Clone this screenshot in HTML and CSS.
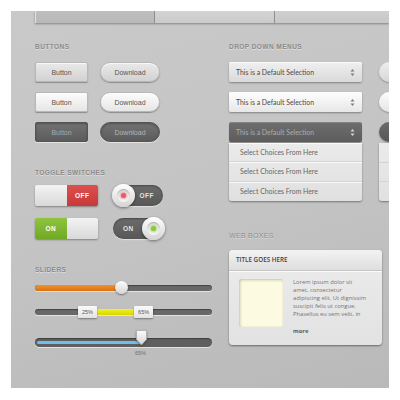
FILE: index.html
```html
<!DOCTYPE html>
<html>
<head>
<meta charset="utf-8">
<link rel="stylesheet" href="styles.css">
</head>
<body>
<div class="panel">
  <div class="tabs">
    <div class="tab t1"></div>
    <div class="tab t2"></div>
    <div class="tab t3"></div>
  </div>

  <div class="cols">
    <div class="col">
      <h2 class="heading">Buttons</h2>
      <div class="btn-grid">
        <button class="btn rect light">Button</button>
        <button class="btn pill light">Download</button>
        <button class="btn rect white">Button</button>
        <button class="btn pill white">Download</button>
        <button class="btn rect dark">Button</button>
        <button class="btn pill dark">Download</button>
      </div>

      <h2 class="heading gap-lg">Toggle Switches</h2>
      <div class="toggle-grid">
        <div class="switch">
          <span class="half blank"></span>
          <span class="half off">OFF</span>
        </div>
        <div class="round-switch">
          <span class="knob left"><span class="dot red"></span></span>
          <span class="round-label right">OFF</span>
        </div>
        <div class="switch">
          <span class="half on">ON</span>
          <span class="half blank"></span>
        </div>
        <div class="round-switch">
          <span class="round-label left">ON</span>
          <span class="knob right"><span class="dot green"></span></span>
        </div>
      </div>

      <h2 class="heading gap-lg">Sliders</h2>
      <div class="slider s1">
        <div class="track">
          <div class="fill orange" style="width:48%"></div>
          <span class="handle-round" style="left:48.5%"></span>
        </div>
      </div>
      <div class="slider s2">
        <div class="track">
          <div class="fill yellow" style="left:30%;width:52px"></div>
          <span class="tag" style="left:24.3%">25%</span>
          <span class="tag" style="left:56%">65%</span>
        </div>
      </div>
      <div class="slider s3">
        <div class="track thick">
          <div class="fill blue" style="width:104px"></div>
          <span class="handle-drop" style="left:100px">
            <svg width="13" height="17" viewBox="0 0 13 17"><defs><linearGradient id="dg" x1="0" y1="0" x2="0" y2="1"><stop offset="0" stop-color="#fbfbfb"/><stop offset="1" stop-color="#d6d6d6"/></linearGradient></defs><path d="M1.5 1.5h10v9l-5 5.5l-5-5.5z" fill="url(#dg)" stroke="#a9a9a9" stroke-width=".8" stroke-linejoin="round"/></svg>
          </span>
        </div>
        <div class="value" style="padding-left:100px">65%</div>
      </div>
    </div>

    <div class="col">
      <h2 class="heading">Drop Down Menus</h2>
      <div class="dd-row">
        <div class="dd-main">
          <div class="select light">This is a Default Selection<svg class="arrows" width="5" height="9" viewBox="0 0 5 9"><path d="M2.5 1L4.5 3.5H.5zM2.5 8L.5 5.5h4z" fill="#7c7c7c"/></svg></div>
          <div class="select white">This is a Default Selection<svg class="arrows" width="5" height="9" viewBox="0 0 5 9"><path d="M2.5 1L4.5 3.5H.5zM2.5 8L.5 5.5h4z" fill="#7c7c7c"/></svg></div>
          <div class="select dark">This is a Default Selection<svg class="arrows" width="5" height="9" viewBox="0 0 5 9"><path d="M2.5 1L4.5 3.5H.5zM2.5 8L.5 5.5h4z" fill="#d6d6d6"/></svg></div>
          <ul class="options">
            <li>Select Choices From Here</li>
            <li>Select Choices From Here</li>
            <li>Select Choices From Here</li>
          </ul>
        </div>
        <div class="dd-alt">
          <span class="circle light"></span>
          <span class="circle white"></span>
          <span class="circle dark"></span>
          <span class="alt-list"></span>
        </div>
      </div>

      <h2 class="heading light-heading">Web Boxes</h2>
      <div class="webbox">
        <div class="webbox-title">TITLE GOES HERE</div>
        <div class="webbox-body">
          <div class="thumb"></div>
          <div class="copy">
            <p>Lorem ipsum dolor sit<br>amet, consectetur<br>adipiscing elit. Ut dignissim<br>suscipit felis ut congue.<br>Phasellus eu sem velit, in</p>
            <a class="more">more</a>
          </div>
        </div>
      </div>
    </div>
  </div>
</div>
</body>
</html>
```

FILE: styles.css
```css
* { box-sizing: border-box; }

body {
  margin: 0;
  background: #fff;
}

.panel {
  width: 378px;
  height: 377px;
  margin: 11px;
  overflow: hidden;
  background: linear-gradient(165deg, #c9c9c9 0%, #c4c4c4 50%, #b9b9b9 100%);
}

/* top tab strip */
.tabs {
  display: flex;
  height: 12px;
  margin-left: 24px;
  box-shadow: 0 1px 2px rgba(0, 0, 0, 0.35);
}
.tab {
  width: 120px;
  border-right: 1px solid #8f8f8f;
}
.t1 { background: linear-gradient(#bebebe, #b9b9b9); border-left: 1px solid #e2e2e2; }
.t2 { background: linear-gradient(#d3d3d3, #cbcbcb); }
.t3 { flex: 1; background: linear-gradient(#cfcfcf, #c8c8c8); border-right: 0; }

.cols {
  display: grid;
  grid-template-columns: 177px 1fr;
  column-gap: 17px;
  padding-left: 24px;
  margin-top: 19px;
}
.col { display: flex; flex-direction: column; }

.heading {
  margin: 0;
  font: bold 6.5px/10px "Liberation Sans", Arial, sans-serif;
  letter-spacing: 0.45px;
  text-transform: uppercase;
  color: #8a8a8a;
  text-shadow: 0 1px 0 rgba(255, 255, 255, 0.45);
}
.gap-lg { margin-top: 26px; }
.light-heading { margin-top: 30px; font-weight: normal; color: #8e8e8e; letter-spacing: 0.3px; font-size: 7px; }

/* buttons */
.btn-grid {
  display: grid;
  grid-template-columns: 53px 60px;
  column-gap: 12px;
  row-gap: 10px;
  margin-top: 10px;
}
.btn {
  height: 20px;
  padding: 0;
  font: 7px "Liberation Sans", Arial, sans-serif;
  color: #555;
  border: 1px solid #b8b8b8;
  box-shadow: 0 1px 1px rgba(0, 0, 0, 0.3), inset 0 1px 0 rgba(255, 255, 255, 0.7);
}
.btn.rect { border-radius: 2px; }
.btn.pill { border-radius: 10px; }
.btn.light { background: linear-gradient(#e9e9e9, #d2d2d2); }
.btn.white { background: linear-gradient(#fcfcfc, #e6e6e6); }
.btn.dark {
  background: linear-gradient(#727272, #5c5c5c);
  border-color: #555;
  color: #a8a8a8;
  box-shadow: 0 1px 0 rgba(255, 255, 255, 0.5), inset 0 1px 2px rgba(0, 0, 0, 0.3);
}
.btn.pill.dark { color: #b4b4b4; }

/* toggles */
.toggle-grid {
  display: grid;
  grid-template-columns: 63px 50px;
  column-gap: 15px;
  row-gap: 12px;
  margin-top: 7px;
}
.switch {
  display: flex;
  height: 21px;
  border-radius: 2px;
  overflow: hidden;
  box-shadow: 0 1px 2px rgba(0, 0, 0, 0.35);
}
.half {
  flex: 1;
  display: flex;
  align-items: center;
  justify-content: center;
  font: bold 6.5px "Liberation Sans", Arial, sans-serif;
  letter-spacing: 0.5px;
  color: #fff;
}
.half.blank { background: linear-gradient(#f3f3f3, #d9d9d9); }
.half.off { background: linear-gradient(#de4f4f, #c83838); }
.half.on { background: linear-gradient(#8fc43c, #70a826); }

.round-switch {
  position: relative;
  height: 21px;
  border-radius: 11px;
  background: linear-gradient(#6c6c6c, #575757);
  box-shadow: 0 1px 1px rgba(255, 255, 255, 0.5), inset 0 1px 2px rgba(0, 0, 0, 0.35);
}
.round-label {
  position: absolute;
  top: 0;
  font: bold 6.5px/21px "Liberation Sans", Arial, sans-serif;
  letter-spacing: 0.5px;
  color: #e2e2e2;
}
.round-label.right { right: 9px; }
.round-label.left { left: 10px; }
.knob {
  position: absolute;
  top: -1px;
  width: 23px;
  height: 23px;
  border-radius: 50%;
  background: linear-gradient(#ffffff, #d4d4d4);
  box-shadow: 0 1px 3px rgba(0, 0, 0, 0.45);
  display: flex;
  align-items: center;
  justify-content: center;
}
.knob.left { left: -1px; }
.knob.right { right: -2px; }
.knob::before {
  content: "";
  position: absolute;
  width: 13px;
  height: 13px;
  border-radius: 50%;
  background: linear-gradient(#d9d9d9, #f6f6f6);
  box-shadow: inset 0 1px 1px rgba(0, 0, 0, 0.2);
}
.dot {
  position: relative;
  width: 5px;
  height: 5px;
  border-radius: 50%;
}
.dot.red { background: #ea5a66; box-shadow: 0 0 2px 1px rgba(240, 140, 150, 0.7); }
.dot.green { background: #8cc63f; box-shadow: 0 0 2px 1px rgba(170, 220, 110, 0.8); }

/* sliders */
.slider .track {
  position: relative;
  height: 6px;
  border-radius: 3px;
  background: #686868;
  box-shadow: inset 0 1px 1px rgba(0, 0, 0, 0.35), 0 1px 0 rgba(255, 255, 255, 0.55);
}
.s1 { margin-top: 10px; }
.s2 { margin-top: 18px; }
.s3 { margin-top: 23px; }
.slider .track.thick {
  height: 9px;
  border-radius: 5px;
  background: #5f5f5f;
}
.fill {
  position: absolute;
  top: 0;
  bottom: 0;
  left: 0;
  border-radius: 3px;
}
.fill.orange { background: linear-gradient(#f0922e, #db7212); }
.fill.yellow { background: linear-gradient(#f2f21c, #d8d800); border-radius: 0; }
.fill.blue {
  top: 3px;
  bottom: 3px;
  left: 2px;
  background: #6cc0ea;
}
.handle-round {
  position: absolute;
  top: -4px;
  width: 13px;
  height: 13px;
  margin-left: -6px;
  border-radius: 50%;
  background: linear-gradient(#fdfdfd, #d5d5d5);
  box-shadow: 0 1px 2px rgba(0, 0, 0, 0.45);
}
.tag {
  position: absolute;
  top: -3px;
  width: 19px;
  height: 12px;
  border-radius: 1px;
  background: linear-gradient(#fafafa, #e3e3e3);
  box-shadow: 0 1px 2px rgba(0, 0, 0, 0.4);
  font: 5.5px/12px "Liberation Sans", Arial, sans-serif;
  color: #555;
  text-align: center;
}
.handle-drop {
  position: absolute;
  top: -9px;
  line-height: 0;
  filter: drop-shadow(0 1px 1px rgba(0, 0, 0, 0.35));
}
.value {
  margin-top: 2px;
  font: 5.5px/8px "Liberation Sans", Arial, sans-serif;
  color: #6e6e6e;
}

/* drop downs */
.dd-row {
  display: flex;
  column-gap: 17px;
  margin-top: 10px;
}
.dd-main {
  display: flex;
  flex-direction: column;
  gap: 10px;
  width: 133px;
  flex: none;
}
.select {
  display: flex;
  align-items: center;
  justify-content: space-between;
  height: 20px;
  padding: 0 7px 0 7px;
  border-radius: 2px;
  font: 6.9px "Lato", "Open Sans", sans-serif;
  color: #4a4a4a;
  box-shadow: 0 1px 2px rgba(0, 0, 0, 0.35), inset 0 1px 0 rgba(255, 255, 255, 0.8);
}
.select.light { background: linear-gradient(#f0f0f0, #d9d9d9); }
.select.white { background: linear-gradient(#fefefe, #e7e7e7); }
.select.dark {
  background: linear-gradient(#6e6e6e, #5c5c5c);
  color: #acacac;
  box-shadow: 0 1px 1px rgba(0, 0, 0, 0.3), inset 0 1px 0 rgba(255, 255, 255, 0.15);
}
.arrows { flex: none; }

.options {
  list-style: none;
  margin: -9px 0 0;
  padding: 0;
  border-radius: 0 0 3px 3px;
  background: linear-gradient(#ebebeb, #e0e0e0);
  box-shadow: 0 1px 2px rgba(0, 0, 0, 0.4);
}
.options li {
  height: 19.3px;
  padding-left: 11px;
  font: 6.9px/19px "Lato", "Open Sans", sans-serif;
  color: #666;
  border-bottom: 1px solid #d3d3d3;
  box-shadow: inset 0 1px 0 rgba(255, 255, 255, 0.8);
}
.options li:last-child { border-bottom: 0; }

.dd-alt {
  display: flex;
  flex-direction: column;
  gap: 10px;
  width: 40px;
  flex: none;
}
.circle {
  width: 21px;
  height: 20px;
  border-radius: 50%;
  box-shadow: 0 1px 2px rgba(0, 0, 0, 0.3);
}
.circle.light { background: linear-gradient(#eeeeee, #d7d7d7); }
.circle.white { background: linear-gradient(#fdfdfd, #e4e4e4); }
.circle.dark { background: linear-gradient(#6a6a6a, #575757); }
.alt-list {
  margin-top: -9px;
  height: 58px;
  border-radius: 0 0 3px 3px;
  background:
    linear-gradient(#d3d3d3, #d3d3d3) 0 19px / 100% 1px no-repeat,
    linear-gradient(#d3d3d3, #d3d3d3) 0 38px / 100% 1px no-repeat,
    linear-gradient(#ebebeb, #e0e0e0);
  box-shadow: 0 1px 2px rgba(0, 0, 0, 0.4);
}

/* web box */
.webbox {
  margin-top: 9px;
  width: 153px;
  height: 95px;
  border-radius: 4px;
  background: linear-gradient(#ececec, #e2e2e2);
  box-shadow: 0 1px 2px rgba(0, 0, 0, 0.45);
  overflow: hidden;
}
.webbox-title {
  height: 21px;
  padding-left: 7px;
  font: 600 6.3px/20px "Open Sans", sans-serif;
  color: #3f3f3f;
  background: linear-gradient(#f3f3f3, #dedede);
  border-bottom: 1px solid #c5c5c5;
  box-shadow: 0 1px 0 rgba(255, 255, 255, 0.8);
}
.webbox-body {
  display: flex;
  gap: 10px;
  padding: 8px 0 0 10px;
}
.thumb {
  width: 44px;
  height: 48px;
  flex: none;
  border-radius: 2px;
  background: #fcfbe2;
  box-shadow: inset 1px 1px 3px rgba(120, 120, 80, 0.45);
}
.copy p {
  margin: -1px 0 0;
  font: 5.8px/8px "Open Sans", sans-serif;
  color: #737373;
  white-space: nowrap;
}
.more {
  display: block;
  margin-top: 9px;
  font: bold 5.8px/8px "Open Sans", sans-serif;
  color: #5c5c5c;
}
```
